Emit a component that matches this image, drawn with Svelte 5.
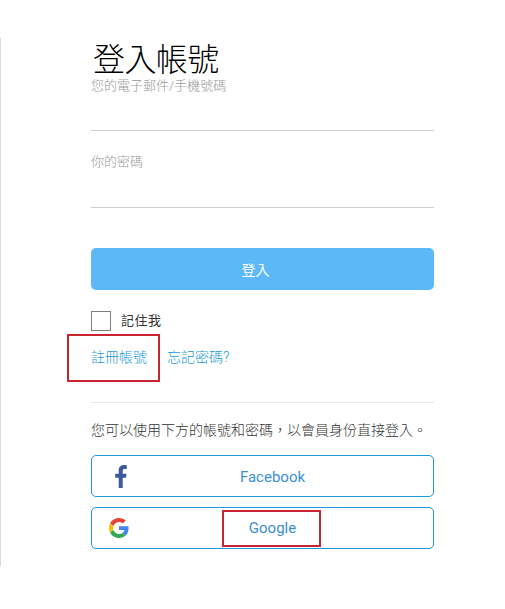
<script>
  let remember = $state(false);
</script>

<div class="page">
  <form class="login" on:submit|preventDefault>
    <h1>登入帳號</h1>
    <label class="field email">
      <span>您的電子郵件/手機號碼</span>
      <input type="text" />
    </label>
    <label class="field password">
      <span>你的密碼</span>
      <input type="password" />
    </label>
    <button class="submit" type="submit">登入</button>
    <label class="remember">
      <input type="checkbox" bind:checked={remember} />
      <span>記住我</span>
    </label>
    <div class="links">
      <a href="#register" class="marked">註冊帳號</a>
      <a href="#forgot">忘記密碼?</a>
    </div>
    <hr />
    <p>您可以使用下方的帳號和密碼，以會員身份直接登入。</p>
    <button class="social" type="button">
      <svg class="fb" viewBox="0 0 12 24" width="12" height="23">
        <path fill="#3f5a9a" d="M3.6 24V13.2H0V9h3.6V5.8C3.6 2.2 5.700 0 9 0c1.300 0 2.300.1 3 .2v3.900H9.900C8.200 4.100 7.800 5 7.800 6.200V9h4l-.6 4.200H7.800V24z" />
      </svg>
      <span class="fb-label">Facebook</span>
    </button>
    <button class="social" type="button">
      <svg class="g" viewBox="0 0 48 48" width="20" height="20">
        <path fill="#ea4335" d="M24 9.500c3.500 0 6.700 1.200 9.200 3.600l6.900-6.900C35.900 2.400 30.500 0 24 0 14.600 0 6.500 5.400 2.600 13.200l8 6.200C12.500 13.600 17.800 9.500 24 9.500z" />
        <path fill="#4285f4" d="M47 24.500c0-1.600-.2-3.100-.4-4.500H24v9h12.900c-.6 3-2.200 5.400-4.700 7.100l7.700 6c4.500-4.200 7.100-10.300 7.100-17.600z" />
        <path fill="#fbbc05" d="M10.500 28.600c-.5-1.400-.8-3-.8-4.600s.3-3.200.8-4.600l-8-6.200C.9 16.500 0 20.100 0 24s.9 7.500 2.600 10.800z" />
        <path fill="#34a853" d="M24 48c6.500 0 11.900-2.100 15.900-5.900l-7.700-6c-2.200 1.400-4.900 2.300-8.200 2.300-6.200 0-11.500-4.200-13.400-9.800l-8 6.200C6.500 42.600 14.600 48 24 48z" />
      </svg>
      <span class="marked-label">Google</span>
    </button>
  </form>
</div>

<style>
  :global(body) {
    margin: 0;
    background: #fff;
    font-family: Roboto, "Noto Sans CJK TC", sans-serif;
  }

  .page {
    margin-top: 38px;
    height: 528px;
    border-left: 1px solid #dcdcdc;
    padding-left: 90px;
  }

  .login {
    width: 343px;
    display: flex;
    flex-direction: column;
  }

  h1 {
    margin: 0;
    padding: 3px 0 0 2px;
    font-size: 32px;
    line-height: 38px;
    font-weight: 300;
    color: #000;
    letter-spacing: -0.6px;
  }

  .field {
    display: flex;
    flex-direction: column;
    font-size: 13px;
    font-weight: 300;
    color: #999;
    border-bottom: 1px solid #cfcfcf;
  }

  .field span {
    line-height: 16px;
  }

  .email {
    height: 52px;
    margin-top: -1px;
  }

  .password {
    height: 53px;
    padding-top: 23px;
  }

  .field input {
    border: 0;
    outline: 0;
    background: none;
    padding: 0;
    height: 30px;
  }

  .submit {
    margin-top: 40px;
    height: 42px;
    border: 0;
    border-radius: 5px;
    background: #5cb8f7;
    color: #fff;
    font: inherit;
    font-size: 14px;
    padding: 0 14px 0 0;
  }

  .remember {
    margin-top: 20px;
    display: flex;
    align-items: center;
    gap: 10px;
    font-size: 13px;
    color: #333;
    letter-spacing: 0.5px;
  }

  .remember span {
    padding-bottom: 2px;
  }

  .remember input {
    appearance: none;
    margin: 0;
    width: 20px;
    height: 20px;
    border: 1px solid #808080;
    background: #fff;
  }

  .links {
    margin-top: 17px;
    display: flex;
    gap: 20px;
    font-size: 14px;
    font-weight: 300;
    line-height: 18px;
  }

  .links a {
    color: #1a9ad6;
    text-decoration: none;
    position: relative;
  }

  .marked::after {
    content: "";
    position: absolute;
    left: -24px;
    top: -14px;
    width: 93px;
    height: 48px;
    box-sizing: border-box;
    border: 2px solid #c9242f;
  }

  hr {
    width: 100%;
    margin: 36px 0 0;
    border: 0;
    border-top: 1px solid #e6e6e6;
  }

  p {
    margin: 17px 0 0;
    font-size: 14px;
    font-weight: 300;
    line-height: 20px;
    color: #333;
  }

  .social {
    position: relative;
    margin-top: 10px;
    height: 42px;
    border: 1px solid #1a9ad6;
    border-radius: 5px;
    background: #fff;
    color: #3a8fd6;
    font: inherit;
    font-size: 15px;
    display: flex;
    align-items: center;
    justify-content: center;
    padding: 0 0 0 20px;
  }

  p + .social {
    margin-top: 15px;
  }

  .social svg {
    position: absolute;
  }

  .fb {
    left: 23px;
    top: 9px;
  }

  .fb-label {
    padding-top: 2px;
  }

  .g {
    left: 17px;
    top: 10px;
  }

  .marked-label {
    position: relative;
  }

  .marked-label::after {
    content: "";
    position: absolute;
    left: -27px;
    top: -9px;
    width: 99px;
    height: 37px;
    box-sizing: border-box;
    border: 2px solid #c9242f;
  }
</style>
